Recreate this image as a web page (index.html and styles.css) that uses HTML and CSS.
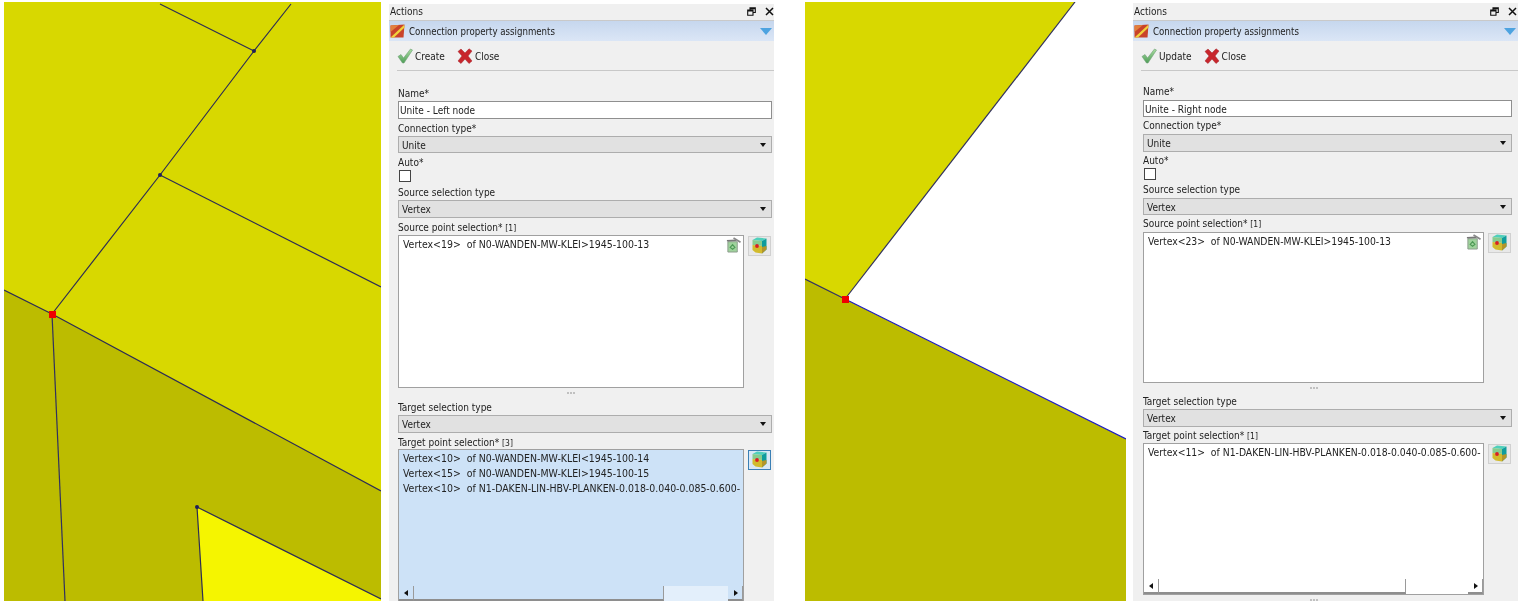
FILE: index.html
```html
<!DOCTYPE html>
<html lang="en">

<head>
    <meta charset="utf-8">
    <title>Connection property assignments</title>
    <link rel="stylesheet" href="styles.css">
</head>

<body>
    <svg class="defs" width="0" height="0" aria-hidden="true">
        <defs>
            <linearGradient id="checkFill" x1="0" y1="0" x2="0" y2="1">
                <stop offset="0" stop-color="#a9dca0" />
                <stop offset="1" stop-color="#4f9e58" />
            </linearGradient>
            <symbol id="iconCheck" viewBox="0 0 16 16">
                <path d="M1 8.5 L4 6.5 L6.5 10 L13.5 1 L15.5 2 L7 15 L5.5 15 Z" fill="url(#checkFill)" stroke="#6f9f77" stroke-width=".6" />
            </symbol>
            <symbol id="iconCross" viewBox="0 0 16 16">
                <path d="M1 3.5 L4 1 L8 5 L12 .8 L15 3 L11 8 L15 13 L12 15.5 L8 11 L4 15.5 L1 13 L5 8 Z" fill="#c8262c" stroke="#a3272c" stroke-width=".5" />
            </symbol>
            <symbol id="iconConn" viewBox="0 0 15 14">
                <path d="M.5 1.5 L14.5 .5 L13.5 13.5 L.5 13.5 Z" fill="#c9432a" />
                <path d="M.5 1.5 L9 1 L.5 8 Z" fill="#e2803c" />
                <path d="M.5 13.5 L14 1 L14.5 3.5 L4 13.5 Z" fill="#f1d23c" />
            </symbol>
            <symbol id="iconCube" viewBox="0 0 15 17">
                <path d="M.5 3 L5 .5 L14.5 1.5 L10 4 Z" fill="#4fd0bb" />
                <path d="M10 4 L14.5 1.5 L14.5 12.5 L10 16.5 Z" fill="#0f9c9c" />
                <path d="M.5 3 L10 4 L10 9 L.5 8 Z" fill="#86cc8e" />
                <path d="M.5 8 L10 9 L10 16.5 L3.5 15.5 L.5 13 Z" fill="#d2bb2c" />
                <path d="M10 10 L14.5 9 L14.5 12.5 L10 16.5 Z" fill="#b3952a" />
                <circle cx="5" cy="9" r="1.9" fill="#d81f26" />
            </symbol>
            <symbol id="iconTrash" viewBox="0 0 16 17">
                <path d="M2 5 L12 5 L12 16 L2 16 Z" fill="#9fd39c" stroke="#8b9a8b" />
                <path d="M4.5 11 L7 8 L9.5 11 L7 13 Z" fill="none" stroke="#4d9a55" stroke-width="1.2" />
                <path d="M1 4 L11 3.5" stroke="#777" stroke-width="1.6" />
                <path d="M8 1 L15.5 5.5" stroke="#888" stroke-width="1.8" />
            </symbol>
            <symbol id="iconFloat" viewBox="0 0 9 9">
                <path d="M3 2.5 V.7 H8.3 V5.5 H6.4 M.7 3 H6 V8.3 H.7 Z M.7 4 H6 M3 1.6 H8.3" fill="none" stroke="#111" stroke-width="1.1" />
            </symbol>
            <symbol id="iconClose" viewBox="0 0 9 9">
                <path d="M1 1 L8 8 M8 1 L1 8" fill="none" stroke="#111" stroke-width="1.5" />
            </symbol>
        </defs>
    </svg>

    <div class="page">
        <svg class="view view-left" viewBox="4 2 377 599" aria-hidden="true">
            <rect x="4" y="2" width="377" height="599" fill="#d8d800" />
            <path d="M4 290 L52 314 L381 491 V601 H65 L4 601 Z" fill="#bcbc00" />
            <path d="M197 507 L381 599 V601 H203 Z" fill="#f5f500" />
            <g fill="none" stroke="#2c2c55" stroke-width="1.2">
                <path d="M4 290 L52 314 L381 491" />
                <path d="M52 314 L160 175 L254 51 L291 4" />
                <path d="M160 175 L381 287" />
                <path d="M160 4 L254 51" />
                <path d="M52 314 L65 601" stroke="#30305f" />
                <path d="M197 507 L203 601 M197 507 L381 599" />
            </g>
            <circle cx="254" cy="51" r="2" fill="#20205a" />
            <circle cx="160" cy="175" r="2" fill="#20205a" />
            <circle cx="197" cy="507" r="2" fill="#20205a" />
            <rect x="49" y="311" width="7" height="7" fill="#f00000" />
        </svg>

        <section class="panel panel-left">
            <div class="dock-title">
                <span>Actions</span>
                <span class="dock-btns">
                    <svg class="icon-9"><use href="#iconFloat" /></svg>
                    <svg class="icon-9"><use href="#iconClose" /></svg>
                </span>
            </div>
            <div class="task-head">
                <svg class="icon-conn"><use href="#iconConn" /></svg>
                <span>Connection property assignments</span>
                <span class="chevron"></span>
            </div>
            <div class="toolbar">
                <button type="button" class="tool-btn"><svg class="icon-16"><use href="#iconCheck" /></svg>Create</button>
                <button type="button" class="tool-btn"><svg class="icon-16"><use href="#iconCross" /></svg>Close</button>
            </div>
            <div class="form">
                <div class="lbl">Name*</div>
                <div class="field text-field">Unite - Left node</div>
                <div class="lbl">Connection type*</div>
                <div class="field combo">Unite</div>
                <div class="lbl">Auto*</div>
                <div class="check"></div>
                <div class="lbl">Source selection type</div>
                <div class="field combo">Vertex</div>
                <div class="lbl">Source point selection* <span class="count">[1]</span></div>
                <div class="pick pick-source">
                    <div class="list">
                        <div class="list-rows">
                            <div>Vertex&lt;19&gt; &nbsp;of N0-WANDEN-MW-KLEI&gt;1945-100-13</div>
                        </div>
                        <svg class="icon-trash"><use href="#iconTrash" /></svg>
                    </div>
                    <button type="button" class="cube-btn"><svg class="icon-cube"><use href="#iconCube" /></svg></button>
                </div>
                <div class="grip"></div>
                <div class="lbl">Target selection type</div>
                <div class="field combo">Vertex</div>
                <div class="lbl">Target point selection* <span class="count">[3]</span></div>
                <div class="pick pick-target">
                    <div class="list list-active">
                        <div class="list-rows">
                            <div>Vertex&lt;10&gt; &nbsp;of N0-WANDEN-MW-KLEI&lt;1945-100-14</div>
                            <div>Vertex&lt;15&gt; &nbsp;of N0-WANDEN-MW-KLEI&gt;1945-100-15</div>
                            <div>Vertex&lt;10&gt; &nbsp;of N1-DAKEN-LIN-HBV-PLANKEN-0.018-0.040-0.085-0.600-</div>
                        </div>
                        <div class="hscroll">
                            <span class="arrow arrow-l"></span>
                            <span class="thumb"></span>
                            <span class="track"></span>
                            <span class="arrow arrow-r"></span>
                        </div>
                    </div>
                    <button type="button" class="cube-btn cube-on"><svg class="icon-cube"><use href="#iconCube" /></svg></button>
                </div>
            </div>
        </section>

        <svg class="view view-right" viewBox="805 2 321 599" aria-hidden="true">
            <path d="M805 2 H1075 L845 299 L805 279 Z" fill="#d8d800" />
            <path d="M805 279 L845 299 L1126 439 V601 H805 Z" fill="#bcbc00" />
            <path d="M1075 2 L845 299" fill="none" stroke="#30305f" stroke-width="1.2" />
            <path d="M805 279 L845 299" fill="none" stroke="#30305f" stroke-width="1.2" />
            <path d="M845 299 L1126 439" fill="none" stroke="#1c1cc0" stroke-width="1.2" />
            <rect x="842" y="296" width="7" height="7" fill="#f00000" />
        </svg>

        <section class="panel panel-right">
            <div class="dock-title">
                <span>Actions</span>
                <span class="dock-btns">
                    <svg class="icon-9"><use href="#iconFloat" /></svg>
                    <svg class="icon-9"><use href="#iconClose" /></svg>
                </span>
            </div>
            <div class="task-head">
                <svg class="icon-conn"><use href="#iconConn" /></svg>
                <span>Connection property assignments</span>
                <span class="chevron"></span>
            </div>
            <div class="toolbar">
                <button type="button" class="tool-btn"><svg class="icon-16"><use href="#iconCheck" /></svg>Update</button>
                <button type="button" class="tool-btn"><svg class="icon-16"><use href="#iconCross" /></svg>Close</button>
            </div>
            <div class="form">
                <div class="lbl">Name*</div>
                <div class="field text-field">Unite - Right node</div>
                <div class="lbl">Connection type*</div>
                <div class="field combo">Unite</div>
                <div class="lbl">Auto*</div>
                <div class="check"></div>
                <div class="lbl">Source selection type</div>
                <div class="field combo">Vertex</div>
                <div class="lbl">Source point selection* <span class="count">[1]</span></div>
                <div class="pick pick-source">
                    <div class="list">
                        <div class="list-rows">
                            <div>Vertex&lt;23&gt; &nbsp;of N0-WANDEN-MW-KLEI&gt;1945-100-13</div>
                        </div>
                        <svg class="icon-trash"><use href="#iconTrash" /></svg>
                    </div>
                    <button type="button" class="cube-btn"><svg class="icon-cube"><use href="#iconCube" /></svg></button>
                </div>
                <div class="grip"></div>
                <div class="lbl">Target selection type</div>
                <div class="field combo">Vertex</div>
                <div class="lbl">Target point selection* <span class="count">[1]</span></div>
                <div class="pick pick-target">
                    <div class="list">
                        <div class="list-rows">
                            <div>Vertex&lt;11&gt; &nbsp;of N1-DAKEN-LIN-HBV-PLANKEN-0.018-0.040-0.085-0.600-</div>
                        </div>
                        <div class="hscroll">
                            <span class="arrow arrow-l"></span>
                            <span class="thumb"></span>
                            <span class="track"></span>
                            <span class="arrow arrow-r"></span>
                        </div>
                    </div>
                    <button type="button" class="cube-btn"><svg class="icon-cube"><use href="#iconCube" /></svg></button>
                </div>
                <div class="grip"></div>
            </div>
        </section>
    </div>
</body>

</html>
```

FILE: styles.css
```css
html, body {
    margin: 0;
    background-color: #fff;
}

body {
    height: 608px;
    overflow: hidden;
    font-family: "DejaVu Sans Condensed", "DejaVu Sans", sans-serif;
    font-size: 10px;
    color: #222;
}

.defs {
    display: block;
    height: 0;
}

.page {
    display: flex;
    align-items: flex-start;
    padding: 2px 0 0 4px;
}

.view {
    display: block;
    flex: none;
    height: 599px;
}

.view-left {
    width: 377px;
}

.view-right {
    width: 321px;
    margin-left: 31px;
    margin-right: 7px;
}

.panel {
    flex: none;
    width: 385px;
    box-sizing: border-box;
    background-color: #f0f0f0;
    overflow: hidden;
    filter: blur(.3px);
}

.panel-left {
    height: 597px;
    margin-top: 2px;
    margin-left: 8px;
    --form-left: 9px;
    --form-right: 2px;
    --form-top: 13px;
    --dock-h: 15px;
    --label-h: 17px;
    --source-h: 153.5px;
    --target-h: 153.5px;
    --title-right: -2px;
    --thumb-w: 250px;
    --rows-font: 10.45px;
}

.panel-right {
    height: 598px;
    margin-top: 1px;
    --form-left: 10px;
    --form-right: 6px;
    --form-top: 12.4px;
    --dock-h: 16px;
    --label-h: 16.6px;
    --source-h: 151px;
    --target-h: 152.4px;
    --title-right: 1px;
    --thumb-w: 247px;
    --rows-font: 10.3px;
}

/* dock title */
.dock-title {
    display: flex;
    justify-content: space-between;
    align-items: center;
    height: var(--dock-h);
    padding-bottom: 1px;
    padding-left: 1px;
    padding-right: var(--title-right);
}

.dock-btns {
    display: flex;
    gap: 9px;
}

.icon-9 {
    width: 9px;
    height: 9px;
}

.task-head {
    display: flex;
    align-items: center;
    height: 20px;
    border-top: 1px solid #c9c9c9;
    background: linear-gradient(#c6d7ee, #dbe6f6);
    font-size: 9.6px;
}

.icon-conn {
    width: 15px;
    height: 14px;
    margin: 0 4px 0 1px;
}

.task-head .chevron {
    width: 0;
    height: 0;
    margin-left: auto;
    margin-right: 2px;
    border-left: 6px solid transparent;
    border-right: 6px solid transparent;
    border-top: 7px solid #4da3e0;
}

.toolbar {
    display: flex;
    align-items: center;
    gap: 12px;
    height: 29px;
    margin-left: 8px;
    border-bottom: 1px solid #c8c8c8;
}

.tool-btn {
    display: flex;
    align-items: center;
    gap: 2px;
    padding: 0;
    padding-top: 1px;
    border: none;
    background: none;
    font: inherit;
    color: #222;
}

.icon-16 {
    width: 16px;
    height: 16px;
}

/* form */
.form {
    padding-top: var(--form-top);
    padding-left: var(--form-left);
    padding-right: var(--form-right);
}

.lbl {
    height: var(--label-h);
    line-height: calc(var(--label-h) + 2px);
    white-space: nowrap;
}

.count {
    font-size: 8.5px;
}

.field {
    box-sizing: border-box;
    height: 17.5px;
    line-height: 17px;
    border: 1px solid #a9a9a9;
    padding-left: 1px;
}

.text-field {
    background-color: #fff;
    border-color: #8f8f8f;
}

.combo {
    position: relative;
    padding-left: 3px;
    background-color: #e1e1e1;
    border-color: #adadad;
}

.combo::after {
    content: "";
    position: absolute;
    right: 5px;
    top: 6px;
    border-left: 3.5px solid transparent;
    border-right: 3.5px solid transparent;
    border-top: 4px solid #111;
}

.check {
    box-sizing: border-box;
    width: 12px;
    height: 12px;
    margin-left: 1px;
    margin-bottom: 1px;
    border: 1px solid #444;
    background-color: #fff;
}

.pick {
    display: flex;
    align-items: flex-start;
    gap: 4px;
}

.pick-source {
    height: var(--source-h);
}

.pick-target {
    height: var(--target-h);
    margin-top: -1px;
}

.list {
    position: relative;
    display: flex;
    flex-direction: column;
    flex: 1;
    min-width: 0;
    height: 100%;
    box-sizing: border-box;
    border: 1px solid #a0a0a0;
    background-color: #fff;
}

.list-active {
    background-color: #cde2f7;
}

.list-rows {
    flex: 1;
    padding-top: 1px;
    padding-left: 4px;
    overflow: hidden;
    white-space: nowrap;
    line-height: 15px;
    font-size: var(--rows-font);
}

.icon-trash {
    position: absolute;
    top: 1px;
    right: 2px;
    width: 15px;
    height: 16px;
}

.cube-btn {
    display: flex;
    align-items: center;
    justify-content: center;
    flex: none;
    box-sizing: border-box;
    width: 23px;
    height: 20px;
    margin-top: 1px;
    margin-right: 1px;
    padding: 0;
    border: 1px solid #d0d0d0;
    background-color: #e8e8e8;
}

.icon-cube {
    width: 15px;
    height: 17px;
}

.cube-on {
    border-color: #3a7fb5;
    background-color: #d9e8f5;
}

.grip {
    display: flex;
    justify-content: center;
    height: 10px;
    padding-top: 4px;
    padding-right: 28px;
    box-sizing: border-box;
}

.grip::before {
    content: "";
    width: 2px;
    height: 2px;
    background-color: #c0c0c0;
    box-shadow: 3px 0 #c0c0c0, -3px 0 #c0c0c0;
}

/* scrollbar */
.hscroll {
    display: flex;
    height: 15px;
    flex: none;
}

.arrow {
    position: relative;
    flex: none;
    width: 15px;
    box-sizing: border-box;
    border-right: 1px solid #9a9a9a;
    border-bottom: 2px solid #8e8e8e;
}

.arrow::after {
    content: "";
    position: absolute;
    top: 4px;
    border-top: 3px solid transparent;
    border-bottom: 3px solid transparent;
}

.arrow-l::after {
    left: 5px;
    border-right: 4px solid #111;
}

.arrow-r::after {
    left: 6px;
    border-left: 4px solid #111;
}

.thumb {
    flex: none;
    width: var(--thumb-w);
    box-sizing: border-box;
    border-right: 1px solid #9a9a9a;
    border-bottom: 2px solid #8e8e8e;
}

.track {
    flex: 1;
}

.list-active .track {
    background-color: #e3effb;
}
```
